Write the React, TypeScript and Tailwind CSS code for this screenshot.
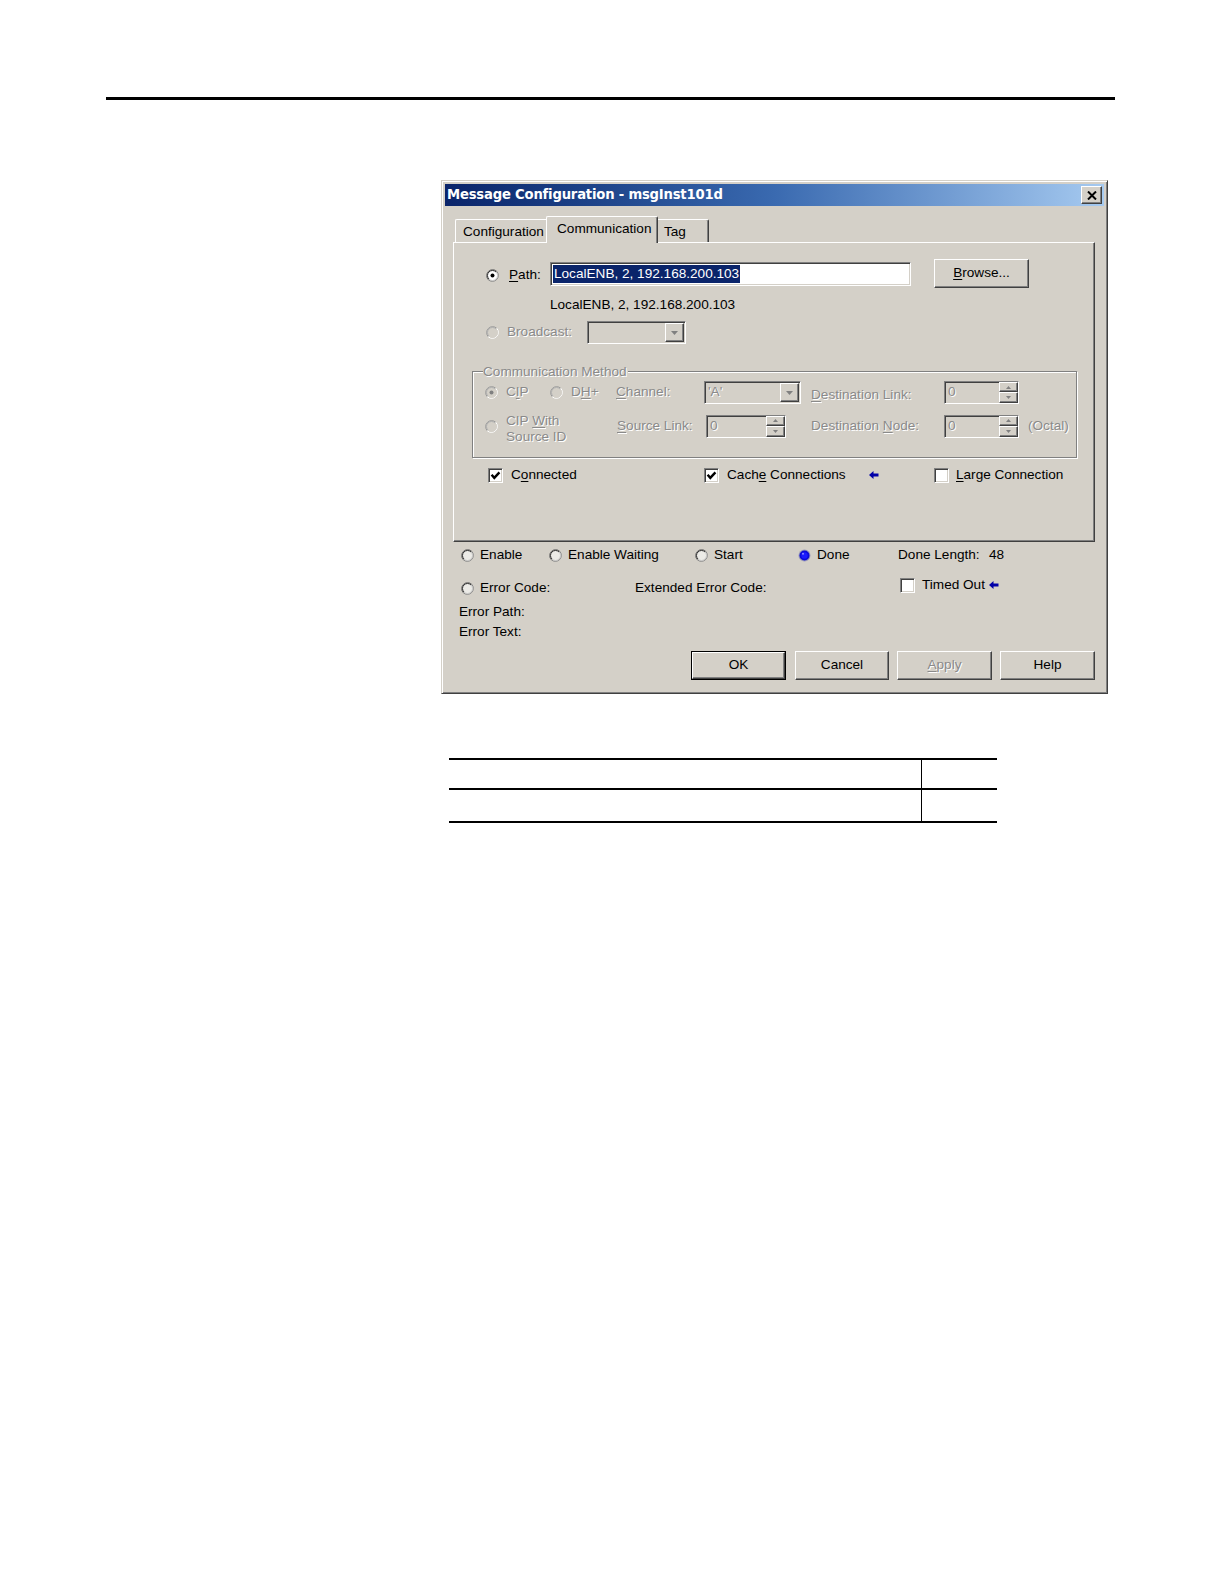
const DIS = "text-[#8a8a8a] [text-shadow:1px_1px_0_#fff]";
const RAISED =
  "border border-t-white border-l-white border-r-[#404040] border-b-[#404040] shadow-[inset_-1px_-1px_0_#808080,inset_1px_1px_0_#d4d0c8]";
const SUNKEN =
  "border border-t-[#808080] border-l-[#808080] border-r-white border-b-white shadow-[inset_1px_1px_0_#404040,inset_-1px_-1px_0_#d4d0c8]";

function Radio({
  checked = false,
  disabled = false,
  fill = "#fff",
}: {
  checked?: boolean;
  disabled?: boolean;
  fill?: string;
}) {
  return (
    <svg width="13" height="13" viewBox="0 0 13 13" className="shrink-0">
      <circle cx="6.5" cy="6.5" r="5" fill={disabled ? "#d4d0c8" : fill} />
      <path d="M2.26 10.74A6 6 0 0 1 10.74 2.26" fill="none" stroke={disabled ? "#9a9a9a" : "#6a6a6a"} />
      <path d="M10.74 2.26A6 6 0 0 1 2.26 10.74" fill="none" stroke={disabled ? "#fff" : "#8a8a8a"} />
      <path d="M2.96 10.04A5 5 0 0 1 10.04 2.96" fill="none" stroke={disabled ? "#b0b0b0" : "#303030"} />
      <path d="M10.04 2.96A5 5 0 0 1 2.96 10.04" fill="none" stroke={disabled ? "#d4d0c8" : "#c8c8c8"} />
      {checked && (
        <circle cx="6.5" cy="6.5" r="2" fill={disabled ? "#808080" : "#000"} />
      )}
    </svg>
  );
}

function BlueRadio() {
  return (
    <svg width="13" height="13" viewBox="0 0 13 13" className="shrink-0">
      <circle cx="6.5" cy="6.5" r="6" fill="#9a9ab8" />
      <circle cx="6.5" cy="6.5" r="5" fill="#0a0ad8" />
      <circle cx="6.5" cy="6.5" r="3.2" fill="#1a1aff" />
      <circle cx="5" cy="4.8" r="1" fill="#8c8cff" />
    </svg>
  );
}

function Check({ checked = false, className = "" }: { checked?: boolean; className?: string }) {
  return (
    <div className={`w-[15px] h-[15px] shrink-0 bg-white ${SUNKEN} ${className}`}>
      {checked && (
        <svg width="13" height="13" viewBox="0 0 13 13">
          <path d="M2.6 5.8 L5.3 8.9 L10.4 3.4" fill="none" stroke="#000" strokeWidth="2.4" />
        </svg>
      )}
    </div>
  );
}

function Arrow({ className = "" }: { className?: string }) {
  return (
    <svg width="10" height="8" viewBox="0 0 10 8" className={`shrink-0 ${className}`}>
      <path d="M0 4 L4.5 0 L4.5 2.5 L9.5 2.5 L9.5 5.5 L4.5 5.5 L4.5 8 Z" fill="#0000a8" />
    </svg>
  );
}

function DropDown({ w, value = "" }: { w: string; value?: string }) {
  return (
    <div className={`${w} h-[23px] shrink-0 flex items-center bg-[#d4d0c8] ${SUNKEN}`}>
      <span className={`flex-1 pl-[3px] ${DIS}`}>{value}</span>
      <div className={`w-[19px] h-[19px] mr-[1px] flex items-center justify-center bg-[#d4d0c8] ${RAISED}`}>
        <svg width="7" height="4" viewBox="0 0 7 4">
          <path d="M0 0 H7 L3.5 4 Z" fill="#808080" />
        </svg>
      </div>
    </div>
  );
}

function SpinBox({ w }: { w: string }) {
  return (
    <div className={`${w} h-[23px] shrink-0 flex items-center bg-[#d4d0c8] ${SUNKEN}`}>
      <span className={`flex-1 pl-[3px] ${DIS}`}>0</span>
      <div className="w-[19px] h-[21px] flex flex-col">
        <div className={`h-[10px] flex items-center justify-center ${RAISED}`}>
          <svg width="5" height="3" viewBox="0 0 5 3">
            <path d="M0 3 H5 L2.5 0 Z" fill="#808080" />
          </svg>
        </div>
        <div className={`h-[11px] flex items-center justify-center ${RAISED}`}>
          <svg width="5" height="3" viewBox="0 0 5 3">
            <path d="M0 0 H5 L2.5 3 Z" fill="#808080" />
          </svg>
        </div>
      </div>
    </div>
  );
}

function Button({
  w,
  children,
  isDefault = false,
  disabled = false,
  className = "",
}: {
  w: string;
  children: React.ReactNode;
  isDefault?: boolean;
  disabled?: boolean;
  className?: string;
}) {
  return (
    <div className={`${w} h-[29px] shrink-0 ${isDefault ? "border border-black" : ""} ${className}`}>
      <div
        className={`h-full w-full flex items-center justify-center ${RAISED} ${
          disabled ? DIS : ""
        }`}
      >
        {children}
      </div>
    </div>
  );
}

function Dialog() {
  return (
    <div className="ml-[441px] mt-[80px] w-[667px] h-[514px] bg-[#d4d0c8] border border-t-[#d4d0c8] border-l-[#d4d0c8] border-r-[#404040] border-b-[#404040] p-[3px] shadow-[inset_1px_1px_0_#fff,inset_-1px_-1px_0_#808080]">
      {/* title bar */}
      <div className="h-[22px] flex items-center justify-between bg-linear-to-r from-[#0a246a] via-[#3a6ab0] to-[#a6caf0] px-[2px]">
        <span className="font-['DejaVu_Sans',Verdana,sans-serif] font-bold text-[13.2px] text-white tracking-[-0.2px]">
          Message Configuration - msgInst101d
        </span>
        <div className={`w-[21px] h-[18px] bg-[#d4d0c8] flex items-center justify-center ${RAISED}`}>
          <svg width="10" height="9" viewBox="0 0 10 9">
            <path d="M1 0.5 L9 8.5 M9 0.5 L1 8.5" stroke="#000" strokeWidth="2" />
          </svg>
        </div>
      </div>

      {/* tabs */}
      <div className="flex items-end h-[26px] mt-[10px] ml-[10px]">
        <div className="w-[93px] h-[23px] border-t border-l border-t-white border-l-white rounded-tl-[2px] pl-[7px] pt-[1px] leading-[22px]">
          Configuration
        </div>
        <div className="relative z-10 -ml-[2px] -mb-px w-[112px] h-[27px] bg-[#d4d0c8] border-t border-l border-r border-t-white border-l-white border-r-[#404040] shadow-[inset_-1px_0_0_#808080] rounded-t-[2px] pl-[10px] pt-[2px] leading-[20px]">
          Communication
        </div>
        <div className="w-[51px] h-[23px] border-t border-r border-t-white border-r-[#404040] shadow-[inset_-1px_0_0_#808080] rounded-tr-[2px] pl-[6px] pt-[1px] leading-[22px]">
          Tag
        </div>
      </div>

      {/* panel */}
      <div className="ml-[8px] w-[642px] h-[300px] border border-t-white border-l-white border-r-[#404040] border-b-[#404040] shadow-[inset_-1px_-1px_0_#808080]">
        <div className="flex items-center h-[29px] mt-[16px]">
          <div className="ml-[32px] pt-[3px]">
            <Radio checked />
          </div>
          <span className="ml-[10px] w-[41px] pt-[4px]">
            <u className="underline-offset-2">P</u>ath:
          </span>
          <div className={`w-[361px] h-[24px] flex items-center bg-white pl-[2px] ${SUNKEN}`}>
            <span className="bg-[#0a246a] text-white leading-[18px] px-[1px]">
              LocalENB, 2, 192.168.200.103
            </span>
          </div>
          <Button w="w-[95px]" className="ml-[23px]">
            <span>
              <u className="underline-offset-2">B</u>rowse...
            </span>
          </Button>
        </div>

        <div className="mt-[8px] h-[18px] leading-[18px] pl-[96px]">LocalENB, 2, 192.168.200.103</div>

        <div className="flex items-center h-[23px] mt-[7px]">
          <div className="ml-[32px]">
            <Radio disabled />
          </div>
          <span className={`ml-[8px] w-[80px] ${DIS}`}>Broadcast:</span>
          <DropDown w="w-[99px]" />
        </div>

        {/* communication method group */}
        <div className="ml-[18px] w-[605px] h-[87px] mt-[27px] border border-[#808080] shadow-[inset_1px_1px_0_#fff,1px_1px_0_#fff]">
          <div className={`-mt-[9px] ml-[10px] w-fit h-[17px] leading-[17px] bg-[#d4d0c8] pr-[1px] ${DIS}`}>
            Communication Method
          </div>
          <div className={`flex items-center h-[23px] mt-[1px] ${DIS}`}>
            <div className="ml-[12px]">
              <Radio checked disabled />
            </div>
            <span className="ml-[8px] w-[44px]">
              C<u className="underline-offset-2">I</u>P
            </span>
            <Radio disabled />
            <span className="ml-[8px] w-[45px]">
              D<u className="underline-offset-2">H</u>+
            </span>
            <span className="w-[88px]">
              <u className="underline-offset-2">C</u>hannel:
            </span>
            <DropDown w="w-[97px]" value="'A'" />
            <span className="ml-[10px] w-[133px] pt-[6px]">
              <u className="underline-offset-2">D</u>estination Link:
            </span>
            <SpinBox w="w-[75px]" />
          </div>
          <div className={`flex items-center h-[26px] mt-[9px] ${DIS}`}>
            <div className="ml-[12px]">
              <Radio disabled />
            </div>
            <div className="ml-[8px] w-[111px] leading-[16px] pt-[6px]">
              <div>
                CIP <u className="underline-offset-2">W</u>ith
              </div>
              <div>Source ID</div>
            </div>
            <span className="w-[89px]">
              <u className="underline-offset-2">S</u>ource Link:
            </span>
            <SpinBox w="w-[80px]" />
            <span className="ml-[25px] w-[133px]">
              Destination <u className="underline-offset-2">N</u>ode:
            </span>
            <SpinBox w="w-[75px]" />
            <span className="ml-[9px]">(Octal)</span>
          </div>
        </div>

        <div className="flex items-center h-[18px] mt-[8px]">
          <Check checked className="ml-[34px]" />
          <span className="ml-[8px] w-[193px]">
            C<u className="underline-offset-2">o</u>nnected
          </span>
          <Check checked />
          <span className="ml-[8px] w-[142px]">
            Cach<u className="underline-offset-2">e</u> Connections
          </span>
          <Arrow />
          <Check className="ml-[55px]" />
          <span className="ml-[7px]">
            <u className="underline-offset-2">L</u>arge Connection
          </span>
        </div>
      </div>

      {/* status */}
      <div className="flex items-center h-[18px] mt-[4px]">
        <div className="ml-[16px]">
          <Radio fill="#ecebe7" />
        </div>
        <span className="ml-[6px] w-[69px]">Enable</span>
        <Radio fill="#ecebe7" />
        <span className="ml-[6px] w-[127px]">Enable Waiting</span>
        <Radio fill="#ecebe7" />
        <span className="ml-[6px] w-[84px]">Start</span>
        <BlueRadio />
        <span className="ml-[6px] w-[81px]">Done</span>
        <span className="w-[91px]">Done Length:</span>
        <span>48</span>
      </div>

      <div className="flex items-center h-[18px] mt-[15px]">
        <div className="ml-[16px]">
          <Radio fill="#ecebe7" />
        </div>
        <span className="ml-[6px] w-[155px]">Error Code:</span>
        <span className="w-[265px]">Extended Error Code:</span>
        <Check className="mb-[6px]" />
        <span className="ml-[7px] mb-[6px]">Timed Out</span>
        <Arrow className="ml-[4px] mb-[6px]" />
      </div>

      <div className="ml-[14px] mt-[6px] h-[18px] leading-[18px]">Error Path:</div>
      <div className="ml-[14px] mt-[2px] h-[18px] leading-[18px]">Error Text:</div>

      <div className="flex mt-[10px] ml-[246px]">
        <Button w="w-[95px]" isDefault>
          OK
        </Button>
        <Button w="w-[94px]" className="ml-[9px]">
          Cancel
        </Button>
        <Button w="w-[95px]" className="ml-[8px]" disabled>
          <span>
            <u className="underline-offset-2">A</u>pply
          </span>
        </Button>
        <Button w="w-[95px]" className="ml-[8px]">
          Help
        </Button>
      </div>
    </div>
  );
}

export default function App() {
  return (
    <div className="w-full h-[1400px] pt-[97px] bg-white overflow-hidden font-['Liberation_Sans',Arial,sans-serif] text-[13.6px] text-black">
      <div className="ml-[106px] w-[1009px] h-[3px] bg-black" />
      <Dialog />
      <div className="ml-[449px] mt-[64px] w-[548px] border-t-2 border-b-2 border-black">
        <div className="grid grid-cols-[473px_1fr] h-[30px] border-b-2 border-black">
          <div className="border-r border-black" />
          <div />
        </div>
        <div className="grid grid-cols-[473px_1fr] h-[31px]">
          <div className="border-r border-black" />
          <div />
        </div>
      </div>
    </div>
  );
}
